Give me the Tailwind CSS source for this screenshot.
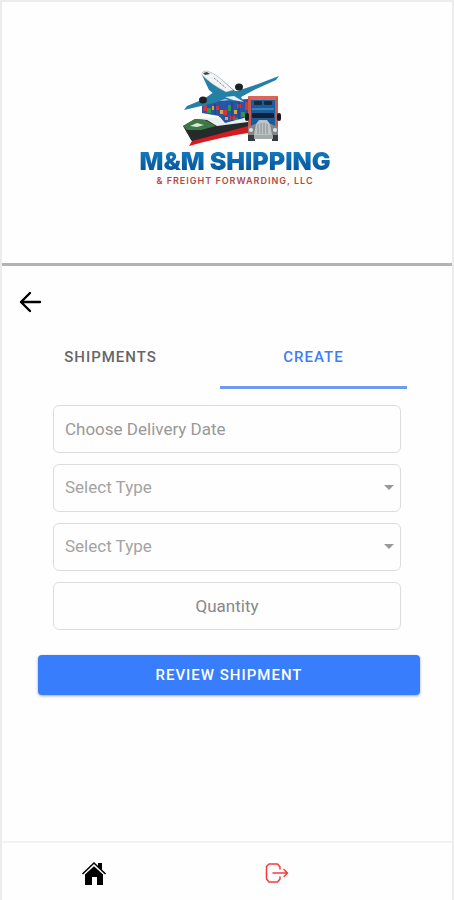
<!DOCTYPE html>
<html lang="en">
<head>
<meta charset="utf-8">
<meta name="viewport" content="width=device-width, initial-scale=1">
<title>M&amp;M Shipping</title>
<script src="https://cdn.jsdelivr.net/npm/@tailwindcss/browser@4"></script>
</head>
<body class="bg-[#fefefe] font-[Roboto,sans-serif]">
<div class="flex min-h-screen flex-col border-x-2 border-t-2 border-[#ececec]">
  <header class="flex flex-col items-center border-b-3 border-[#b3b3b3] pt-[66px] pb-[77px] pl-4">
    <svg class="h-[78px] w-[100px] overflow-visible" viewBox="0 0 100 78" aria-hidden="true">
      <!-- containers -->
      <path d="M17 35 30 33 63 31V55L36 56 34 48 17 45Z" fill="#2655a8"/>
      <path d="M18 37h4v6h-4zM38 42h4v5h-4zM52 36h4v4h-4zM45 48h5v4h-5zM60 34h3v8h-3zM31 38h3v4h-3z" fill="#d53535"/>
      <path d="M22 40h4v5h-4zM43 37h3v6h-3zM56 44h4v5h-4zM50 50h3v3h-3z" fill="#2d9650"/>
      <path d="M27 38h2v4h-2zM35 42h3v4h-3zM49 42h3v4h-3zM40 49h3v3h-3z" fill="#e7a13a"/>
      <path d="M30 36v10M47 34v20M54 33v20" stroke="#193970" stroke-width=".7"/>
      <!-- ship -->
      <path d="M11 51 35 49 40 55 63 49V56L40 63 10 66Z" fill="#e9eeee"/>
      <path d="M-2 58 10 51 22 52 32 58 63 54V62L8 74 6 72Z" fill="#252b2b"/>
      <path d="M7 73 30 67 63 58V65Q36 69 4 78Z" fill="#d71920"/>
      <path d="M-2 58 10 51 20 52 31 58 16 62 2 62Z" fill="#3e7945"/>
      <path d="M5 58 12 55 19 57 12 59Z" fill="#dbe8db"/>
      <!-- plane -->
      <path d="M37 23 52 23 73 16 94 8 91 12 69 22 56 29 58 33 51 32 43 30 29 35 -1 42 2 38 19 31 29 24Z" fill="#2580a5"/>
      <path d="M17 7Q16 3 22 3 29 5 36 11L50 23 57 31 48 33 34 30 24 22Z" fill="#2580a5"/>
      <path d="M17 7Q16 3 22 3 29 5 36 11L48 22 41 24Q27 17 17 7Z" fill="#f3f4f4" stroke="#adb8bd" stroke-width=".5"/>
      <path d="M18 5 22 4 25 6 20 7Z" fill="#39424a"/>
      <path d="M29 10 41 20" stroke="#59636b" stroke-dasharray="1 1"/>
      <path d="M40 29 49 28 59 34 48 32Z" fill="#e8f1f4"/>
      <ellipse cx="54" cy="19" rx="4" ry="3.500" fill="#1b2228"/>
      <ellipse cx="18" cy="32" rx="4" ry="3.500" fill="#1b2228"/>
      <!-- truck -->
      <path d="M63 28H93L90 34H66Z" fill="#dc6653"/>
      <path d="M63 28 67 33V65H63ZM93 28 89 33V65H93Z" fill="#c85b4d"/>
      <rect x="66" y="32" width="24" height="33" fill="#195d9e"/>
      <rect x="69" y="33" width="8" height="4" rx="1" fill="#17293d"/>
      <rect x="79" y="33" width="8" height="4" rx="1" fill="#17293d"/>
      <path d="M67 41h22" stroke="#3b80b9" stroke-width="2"/>
      <rect x="67" y="45" width="22" height="5" rx="1" fill="#142031"/>
      <rect x="60" y="45" width="4" height="8" rx="2" fill="#181c20"/>
      <rect x="92" y="45" width="4" height="8" rx="2" fill="#181c20"/>
      <path d="M63 59 70 56H86L93 59V70H63Z" fill="#80868a"/>
      <path d="M71 56 74 52H82L85 56 87 67H69Z" fill="#bdc2c4"/>
      <path d="M73 56V66M76 55V66M79 55V66M82 56V66" stroke="#7c8387" stroke-width=".8"/>
      <path d="M63 67H93V73H87V70H70V73H63Z" fill="#343a3e"/>
      <path d="M69 67H88V71H69Z" fill="#a4a9ac"/>
      <circle cx="66" cy="62" r="2" fill="#dfe2e4"/><circle cx="90" cy="62" r="2" fill="#dfe2e4"/>
    </svg>
    <h1 class="bg-linear-to-b from-[#1784c7] to-[#074b91] bg-clip-text font-[Inter,sans-serif] text-[25px] leading-[30px] font-black text-transparent">M&amp;M SHIPPING</h1>
    <p class="font-[Inter,sans-serif] text-[9px] leading-[10px] font-semibold tracking-[1px] text-[#b04b42]">&amp; FREIGHT FORWARDING, LLC</p>
  </header>

  <main class="flex flex-1 flex-col">
    <div class="px-4 pt-6">
      <button type="button" aria-label="Back" class="block">
        <svg class="size-6" viewBox="0 0 24 24" fill="none" stroke="#000" stroke-width="2.4" stroke-linecap="round" stroke-linejoin="round"><path d="M22 12H3M12 3 3 12l9 9"/></svg>
      </button>
    </div>

    <div role="tablist" class="mt-[15px] mr-[45px] ml-[15px] grid grid-cols-2 gap-4 text-[15px] font-medium tracking-[1px]">
      <button type="button" role="tab" aria-selected="false" class="h-15 border-b-3 border-transparent text-[#666]">SHIPMENTS</button>
      <button type="button" role="tab" aria-selected="true" class="h-15 border-b-3 border-[#6f9af0] text-[#3f7df5]">CREATE</button>
    </div>

    <form class="mt-4 flex flex-col">
      <div class="mx-[51px] flex flex-col gap-[11px] text-[17px] text-[#999]">
        <input type="text" aria-label="Delivery date" placeholder="Choose Delivery Date" class="h-12 w-full rounded-md border border-[#dcdcdc] px-[11px] placeholder:text-[#999]">
        <div class="relative">
          <select aria-label="Shipment type" class="h-12 w-full appearance-none rounded-md border border-[#dcdcdc] px-[11px] text-[#a3a3a3]"><option>Select Type</option></select>
          <svg class="pointer-events-none absolute top-[21px] right-[7px] h-[5px] w-[10px]" viewBox="0 0 10 5" fill="#999"><path d="M0 0h10L5 5z"/></svg>
        </div>
        <div class="relative">
          <select aria-label="Package type" class="h-12 w-full appearance-none rounded-md border border-[#dcdcdc] px-[11px] text-[#a3a3a3]"><option>Select Type</option></select>
          <svg class="pointer-events-none absolute top-[21px] right-[7px] h-[5px] w-[10px]" viewBox="0 0 10 5" fill="#999"><path d="M0 0h10L5 5z"/></svg>
        </div>
        <input type="text" inputmode="numeric" aria-label="Quantity" placeholder="Quantity" class="h-12 w-full rounded-md border border-[#dcdcdc] px-[11px] text-center placeholder:text-[#888]">
      </div>
      <button type="submit" class="mt-[25px] mr-8 ml-9 h-10 rounded-sm bg-[#387dfc] text-[15px] font-medium tracking-[1px] text-white shadow-[0_1px_3px_rgba(0,0,0,0.35)]">REVIEW SHIPMENT</button>
    </form>
  </main>

  <nav aria-label="Main" class="grid h-[59px] grid-cols-2 items-center border-t-2 border-[#f2f2f2] pt-1 pr-[84px]">
    <a href="#" aria-label="Home" class="justify-self-center">
      <svg class="size-[26px]" viewBox="0 0 26 26"><path d="M17 2h4v8l-4-4z" fill="#000"/><path d="M13 5 22 13v11h-6v-8h-5v8H4V13z" fill="#000"/><path d="M1.500 13 13 2l11.500 11" fill="none" stroke="#000" stroke-width="1.600"/><path d="M3 14 13 4.500l10 9.500" fill="none" stroke="#fff" stroke-width="1"/></svg>
    </a>
    <a href="#" aria-label="Log out" class="justify-self-center">
      <svg class="size-6" viewBox="0 0 24 24" fill="none" stroke="#f83a3a" stroke-width="1.500" stroke-linecap="round" stroke-linejoin="round"><path d="M15 7V5l-2.500-3H4L1.500 4.500V17L4 20h8.500l2.500-3v-2M8 11h14.500M19 7.500l3.500 3.500-3.500 3.500"/></svg>
    </a>
  </nav>
</div>
</body>
</html>
